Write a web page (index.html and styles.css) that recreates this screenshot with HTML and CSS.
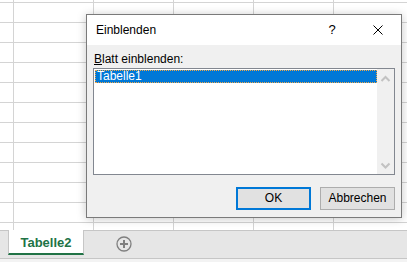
FILE: index.html
```html
<!DOCTYPE html>
<html lang="de">
<head>
<meta charset="utf-8">
<title>Einblenden</title>
<link rel="stylesheet" href="styles.css">
</head>
<body>
<div class="app">
  <div class="sheet">
    <div class="dialog">
      <div class="titlebar">
        <div class="title">Einblenden</div>
        <div class="cap-btn help">?</div>
        <div class="cap-btn close">
          <svg width="10" height="10" viewBox="0 0 10 10"><path d="M0.5 0.5 L9.5 9.5 M9.5 0.5 L0.5 9.5" stroke="#000" stroke-width="1" fill="none"/></svg>
        </div>
      </div>
      <div class="body">
        <div class="label"><span class="acc">B</span>latt einblenden:</div>
        <div class="listbox">
          <div class="items">
            <div class="item selected">Tabelle1</div>
          </div>
          <div class="scrollbar">
            <div class="arrow">
              <svg width="17" height="17" viewBox="0 0 17 17"><polyline points="4.5,12 8.5,8 12.5,12" stroke="#c2c2c2" stroke-width="2" fill="none"/></svg>
            </div>
            <div class="arrow">
              <svg width="17" height="17" viewBox="0 0 17 17"><polyline points="4.5,6.5 8.5,10.5 12.5,6.5" stroke="#c2c2c2" stroke-width="2" fill="none"/></svg>
            </div>
          </div>
        </div>
        <div class="buttons">
          <div class="btn default">OK</div>
          <div class="btn">Abbrechen</div>
        </div>
      </div>
    </div>
  </div>
  <div class="tabbar">
    <div class="tab">Tabelle2</div>
    <div class="add">
      <svg width="16" height="16" viewBox="0 0 16 16"><circle cx="8" cy="8" r="7" stroke="#7f7f7f" stroke-width="1.3" fill="none"/><path d="M8 4 V12 M4 8 H12" stroke="#7f7f7f" stroke-width="2" fill="none"/></svg>
    </div>
  </div>
  <div class="status"></div>
</div>
</body>
</html>
```

FILE: styles.css
```css
* { box-sizing: border-box; }
html, body { margin: 0; padding: 0; }
body {
  width: 407px;
  height: 262px;
  overflow: hidden;
  font-family: "Liberation Sans", Arial, sans-serif;
  font-size: 12px;
  color: #000;
  background: #fff;
}
.app {
  display: flex;
  flex-direction: column;
  height: 262px;
}
.sheet {
  position: relative;
  height: 230px;
  background-color: #fff;
  background-image:
    linear-gradient(to right, #d4d4d4 1px, transparent 1px),
    linear-gradient(to bottom, #d4d4d4 1px, transparent 1px);
  background-size: 80px 20px, 80px 20px;
  background-position: 13px 0, 0 2px;
}
.dialog {
  position: absolute;
  left: 86px;
  top: 14px;
  width: 316px;
  height: 204px;
  border: 1px solid #7a7a7a;
  background: #f0f0f0;
  box-shadow: 0 1px 9px rgba(0, 0, 0, 0.22);
  display: flex;
  flex-direction: column;
}
.titlebar {
  height: 30px;
  background: #fff;
  display: flex;
  align-items: center;
}
.title {
  flex: 1;
  padding-left: 9px;
  line-height: 15px;
}
.cap-btn {
  width: 46px;
  height: 30px;
  display: flex;
  align-items: center;
  justify-content: center;
}
.help {
  font-size: 13px;
  padding-bottom: 1px;
}
.close svg { display: block; }
.body {
  flex: 1;
  padding: 7px 6px 7px 6px;
  display: flex;
  flex-direction: column;
}
.label {
  line-height: 15px;
  padding-left: 1px;
  margin-bottom: 1px;
}
.acc { text-decoration: underline; }
.listbox {
  height: 107px;
  border: 1px solid #828790;
  background: #fff;
  display: flex;
}
.items {
  flex: 1;
  padding: 1px 0 0 1px;
}
.item {
  height: 13px;
  line-height: 11px;
  padding-left: 1px;
  border: 1px dotted transparent;
}
.item.selected {
  background: #0078d7;
  color: #fff;
  border-color: #f0a848;
}
.scrollbar {
  width: 17px;
  background: #f0f0f0;
  display: flex;
  flex-direction: column;
  justify-content: space-between;
}
.arrow { height: 17px; }
.arrow svg { display: block; }
.buttons {
  margin-top: 12px;
  display: flex;
  justify-content: flex-end;
  gap: 9px;
}
.btn {
  width: 75px;
  height: 23px;
  border: 1px solid #adadad;
  background: #e1e1e1;
  display: flex;
  align-items: center;
  justify-content: center;
  line-height: 15px;
}
.btn.default {
  border: 2px solid #0078d7;
}
.tabbar {
  height: 29px;
  background: #e6e6e6;
  border-top: 1px solid #c6c6c6;
  border-bottom: 1px solid #c6c6c6;
  display: flex;
  align-items: flex-start;
}
.tab {
  margin-top: -1px;
  margin-left: 8px;
  width: 76px;
  height: 25px;
  background: #fff;
  border-left: 1px solid #c6c6c6;
  border-right: 1px solid #c6c6c6;
  border-bottom: 2px solid #217346;
  color: #217346;
  font-weight: bold;
  font-size: 13px;
  line-height: 16px;
  padding-top: 5px;
  text-align: center;
}
.add {
  margin-left: 32px;
  margin-top: 5px;
}
.add svg { display: block; }
.status {
  flex: 1;
  background: #f3f3f3;
}
```
